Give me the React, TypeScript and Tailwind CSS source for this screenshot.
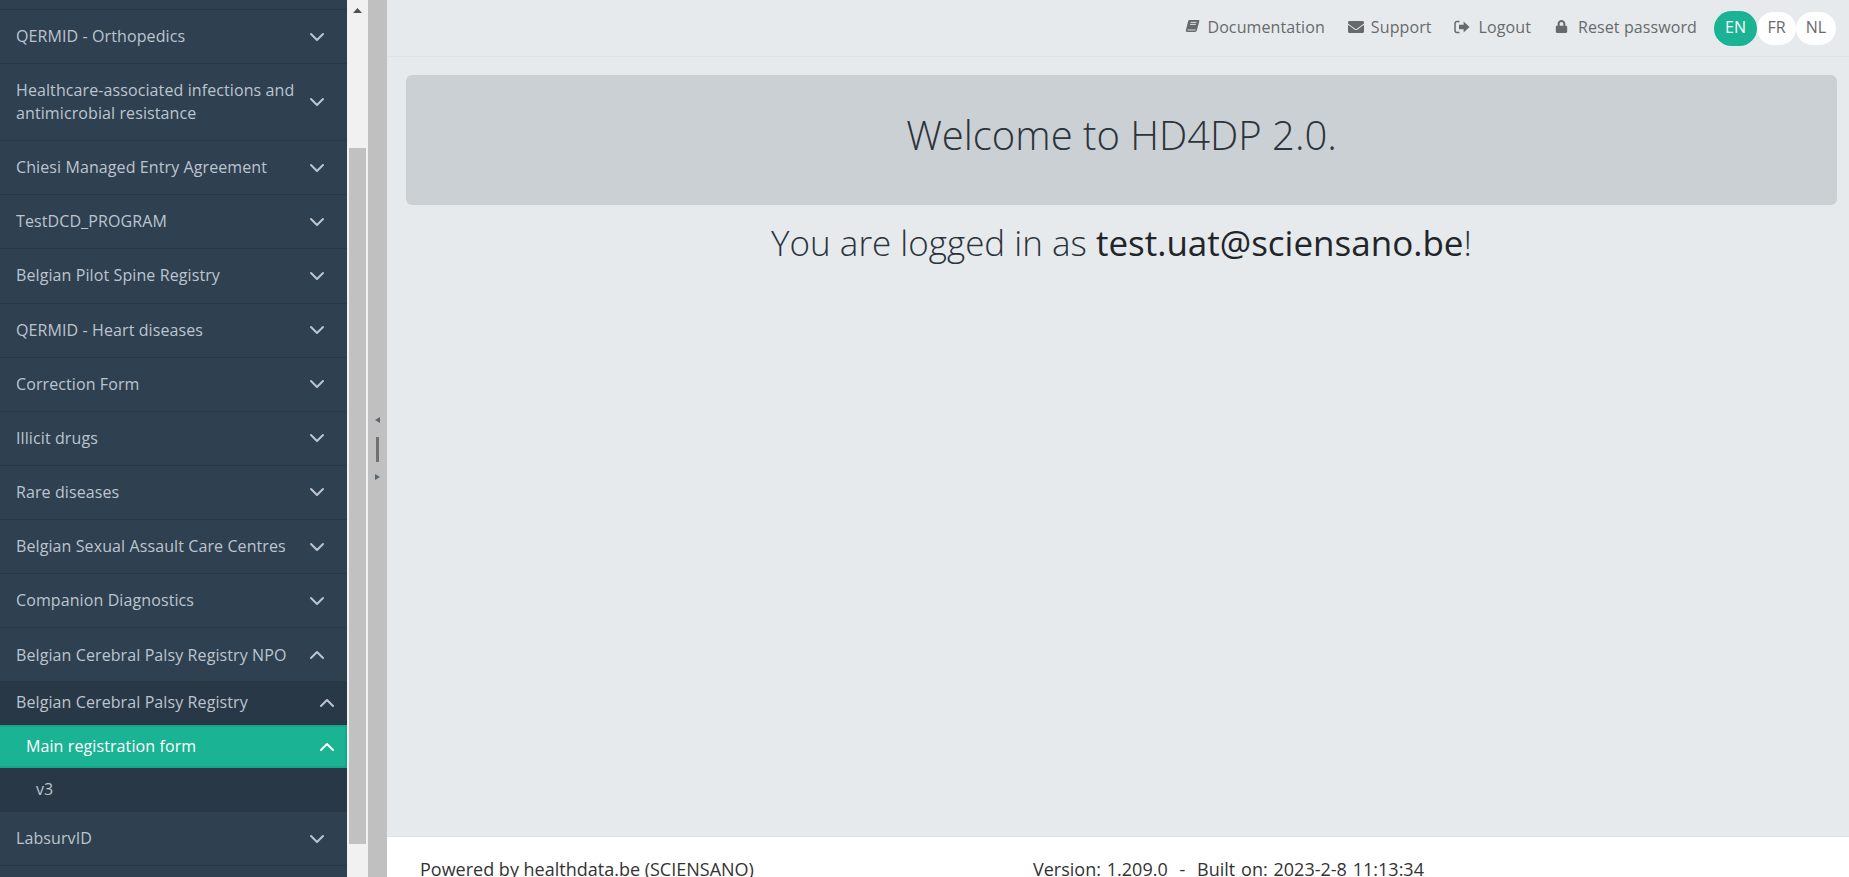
import React from "react";
import { ChevronDown, ChevronUp } from "lucide-react";
import { FaEnvelope, FaLock } from "react-icons/fa";

const font = "font-['Open_Sans',sans-serif]";

function Row({ label, h = "h-[54.14px]" }: { label: React.ReactNode; h?: string }) {
  return (
    <div className={`${h} shrink-0 flex items-center justify-between border-b border-[#293846] pl-4 pr-[18px] text-[#bcc5cf] text-base leading-[23px] tracking-[0.1px]`}>
      <span className="w-[290px]">{label}</span>
      <ChevronDown size={24} strokeWidth={2} className="shrink-0" />
    </div>
  );
}

function Sidebar() {
  return (
    <div className="w-[347px] shrink-0 h-full flex flex-col bg-[#2f4050] overflow-hidden">
      <div className="h-[10px] shrink-0 border-b border-[#293846]" />
      <Row label="QERMID - Orthopedics" />
      <Row label="Healthcare-associated infections and antimicrobial resistance" h="h-[77px]" />
      <Row label="Chiesi Managed Entry Agreement" />
      <Row label="TestDCD_PROGRAM" />
      <Row label="Belgian Pilot Spine Registry" />
      <Row label="QERMID - Heart diseases" />
      <Row label="Correction Form" />
      <Row label="Illicit drugs" />
      <Row label="Rare diseases" />
      <Row label="Belgian Sexual Assault Care Centres" />
      <Row label="Companion Diagnostics" />
      <div className="h-[53px] shrink-0 flex items-center justify-between pl-4 pr-[18px] text-[#bcc5cf] text-base tracking-[0.1px]">
        <span>Belgian Cerebral Palsy Registry NPO</span>
        <ChevronUp size={24} strokeWidth={2} />
      </div>
      <div className="bg-[#293846] shrink-0">
        <div className="h-11 flex items-center justify-between pl-4 pr-2 text-[#bcc5cf] text-base tracking-[0.1px]">
          <span className="pb-[3px]">Belgian Cerebral Palsy Registry</span>
          <ChevronUp size={24} strokeWidth={2} />
        </div>
        <div className="h-[43px] flex items-center justify-between pl-[26px] pr-2 text-white text-base tracking-[0.1px] bg-[#1ab394] border-y-2 border-r-2 border-[#18a689]">
          <span className="pb-[2px]">Main registration form</span>
          <ChevronUp size={24} strokeWidth={2} className="-mr-0.5" />
        </div>
        <div className="h-11 flex items-center pl-9 pb-[2px] text-[#bcc5cf] text-base">v3</div>
      </div>
      <Row label="LabsurvID" />
    </div>
  );
}

function Scrollbar() {
  return (
    <div className="w-[21px] shrink-0 h-full bg-[#f1f1f1] flex flex-col items-center">
      <div className="h-[148px] w-full flex justify-center pt-[8px]">
        <svg width="9" height="5" viewBox="0 0 9 5"><path d="M4.5 0L9 5H0z" fill="#505050" /></svg>
      </div>
      <div className="w-[17px] h-[696px] bg-[#c1c1c1]" />
    </div>
  );
}

function Splitter() {
  return (
    <div className="w-[19px] shrink-0 h-full bg-[#c0c0c0] flex flex-col items-center justify-center">
      <div className="flex flex-col items-center mt-[19px]">
        <svg width="5" height="6" viewBox="0 0 5 6"><path d="M5 0V6L0 3z" fill="#5b6670" /></svg>
        <div className="w-[3px] h-[25px] bg-[#6f7275] mt-[14px] mb-[12px]" />
        <svg width="5" height="6" viewBox="0 0 5 6"><path d="M0 0V6L5 3z" fill="#5b6670" /></svg>
      </div>
    </div>
  );
}

function BookIcon() {
  return (
    <svg width="15" height="15" viewBox="0 0 15 15" fill="#676a6c">
      <path d="M4.2 1h9.3c.7 0 1 .5.8 1.2l-2.5 9.3c-.3.9-.8 1.4-1.7 1.4H2.3c-.9 0-1.6-.7-1.5-1.7.1-.5.3-1.2.5-1.8L3.2 2c.2-.6.5-1 1-1z" />
      <path d="M5.7 3.4h5.8M5 5.4h5.8M2.6 11h8" stroke="#e6eaed" strokeWidth="0.9" />
    </svg>
  );
}

function LogoutIcon() {
  return (
    <svg width="16" height="14" viewBox="0 0 16 14" fill="#676a6c">
      <path d="M5.5 1.5H3A2 2 0 0 0 1 3.5v7a2 2 0 0 0 2 2h2.5" fill="none" stroke="#676a6c" strokeWidth="1.5" />
      <path d="M5 4.7h4.6V1.6L15.5 7l-5.9 5.4V9.3H5z" />
    </svg>
  );
}

function TopBar() {
  const cls = "flex items-center text-[#676a6c] text-base tracking-[0.1px] pb-[3px]";
  return (
    <div className="h-[57px] shrink-0 flex items-center justify-end pr-[13px] border-b border-[#dfe3e6] text-[#676a6c]">
      <div className={cls}><BookIcon /><span className="ml-[7px]">Documentation</span></div>
      <div className={`${cls} ml-[23px]`}><FaEnvelope size={16} /><span className="ml-[7px]">Support</span></div>
      <div className={`${cls} ml-[22px]`}><LogoutIcon /><span className="ml-[9px]">Logout</span></div>
      <div className={`${cls} ml-6`}><FaLock size={13} /><span className="ml-[10px]">Reset password</span></div>
      <div className="flex items-center ml-[17px] text-base">
        <div className="w-[43px] h-[35px] pb-[3px] rounded-full bg-[#1ab394] text-white flex items-center justify-center">EN</div>
        <div className="w-[39px] h-[33px] pb-[3px] rounded-full bg-white flex items-center justify-center">FR</div>
        <div className="w-[40px] h-[33px] pb-[3px] rounded-full bg-white flex items-center justify-center">NL</div>
      </div>
    </div>
  );
}

export default function App() {
  return (
    <div className={`h-screen w-full flex overflow-hidden bg-[#e6eaed] ${font}`}>
      <Sidebar />
      <Scrollbar />
      <Splitter />
      <div className="flex-1 min-w-0 flex flex-col h-full">
        <TopBar />
        <div className="flex-1 pl-[19px] pr-3 pt-[18px]">
          <div className="h-[130px] pb-[10px] rounded-md bg-[#cbd0d4] flex items-center justify-center">
            <h1 className="text-[40px] font-light text-[#2b333b]">Welcome to HD4DP 2.0.</h1>
          </div>
          <p className="mt-[13px] text-center text-[35px] leading-[50px] font-light text-[#2b333b]">
            You are logged in as <span className="font-normal text-[#212529]">test.uat@sciensano.be</span>!
          </p>
        </div>
        <div className="h-[41px] shrink-0 bg-white border-t border-[#dfe3e6] flex pl-[33px] pt-[19px] text-[#333] text-[18px] overflow-hidden">
          <span className="w-[613px] shrink-0">Powered by healthdata.be (SCIENSANO)</span>
          <span className="whitespace-pre [word-spacing:1.2px]">Version: 1.209.0  -  Built on: 2023-2-8 11:13:34</span>
        </div>
      </div>
    </div>
  );
}
